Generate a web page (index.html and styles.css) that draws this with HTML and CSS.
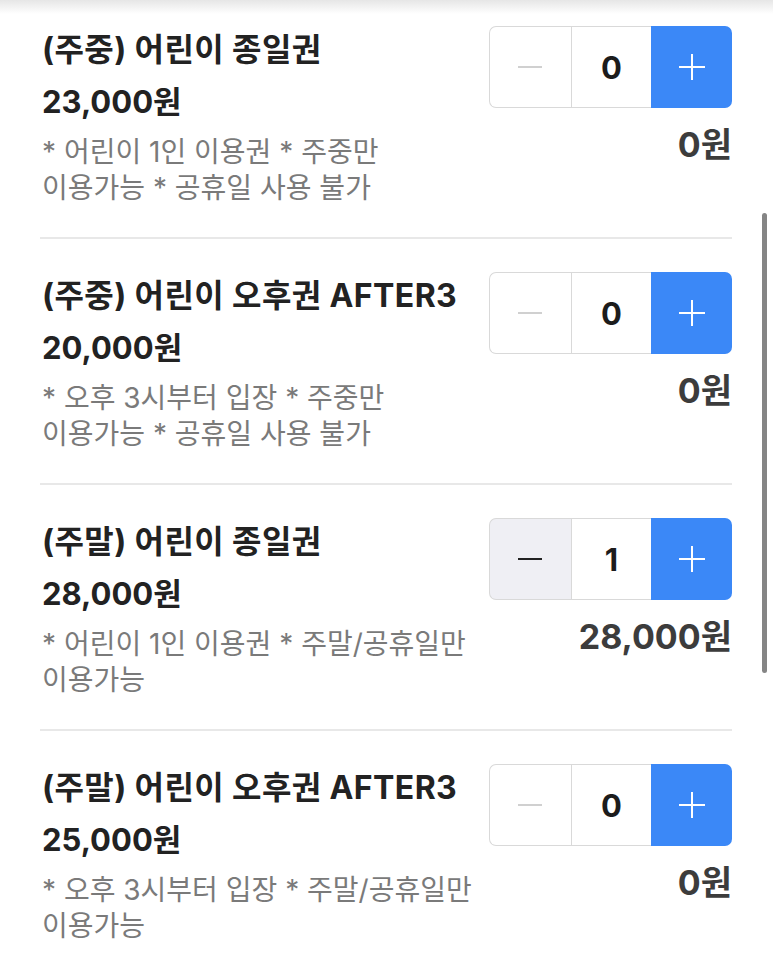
FILE: index.html
```html
<!DOCTYPE html>
<html lang="ko">
  <head>
    <meta charset="UTF-8" />
    <meta name="viewport" content="width=device-width, initial-scale=1.0" />
    <title>이용권 선택</title>
    <link rel="stylesheet" href="styles.css">
  </head>
  <body>
    <div class="top-shadow"></div>
    <div class="scroll-thumb"></div>
    <div class="ticket-list">
      <div class="ticket">
        <div class="info">
          <div class="name">(주중) 어린이 종일권</div>
          <div class="price">23,000원</div>
          <div class="desc">* 어린이 1인 이용권 * 주중만 이용가능 * 공휴일 사용 불가</div>
        </div>
        <div class="order">
          <div class="stepper">
            <div class="btn minus disabled">
              <svg width="26" height="26" viewBox="0 0 26 26"><path d="M1 13h24" /></svg>
            </div>
            <div class="count">0</div>
            <div class="btn plus">
              <svg width="28" height="28" viewBox="0 0 28 28"><path d="M1 14h26M14 1v26" /></svg>
            </div>
          </div>
          <div class="total">0원</div>
        </div>
      </div>

      <div class="ticket">
        <div class="info">
          <div class="name">(주중) 어린이 오후권 AFTER3</div>
          <div class="price">20,000원</div>
          <div class="desc">* 오후 3시부터 입장 * 주중만 이용가능 * 공휴일 사용 불가</div>
        </div>
        <div class="order">
          <div class="stepper">
            <div class="btn minus disabled">
              <svg width="26" height="26" viewBox="0 0 26 26"><path d="M1 13h24" /></svg>
            </div>
            <div class="count">0</div>
            <div class="btn plus">
              <svg width="28" height="28" viewBox="0 0 28 28"><path d="M1 14h26M14 1v26" /></svg>
            </div>
          </div>
          <div class="total">0원</div>
        </div>
      </div>

      <div class="ticket">
        <div class="info">
          <div class="name">(주말) 어린이 종일권</div>
          <div class="price">28,000원</div>
          <div class="desc">* 어린이 1인 이용권 * 주말/공휴일만 이용가능</div>
        </div>
        <div class="order">
          <div class="stepper">
            <div class="btn minus">
              <svg width="26" height="26" viewBox="0 0 26 26"><path d="M1 13h24" /></svg>
            </div>
            <div class="count">1</div>
            <div class="btn plus">
              <svg width="28" height="28" viewBox="0 0 28 28"><path d="M1 14h26M14 1v26" /></svg>
            </div>
          </div>
          <div class="total">28,000원</div>
        </div>
      </div>

      <div class="ticket">
        <div class="info">
          <div class="name">(주말) 어린이 오후권 AFTER3</div>
          <div class="price">25,000원</div>
          <div class="desc">* 오후 3시부터 입장 * 주말/공휴일만 이용가능</div>
        </div>
        <div class="order">
          <div class="stepper">
            <div class="btn minus disabled">
              <svg width="26" height="26" viewBox="0 0 26 26"><path d="M1 13h24" /></svg>
            </div>
            <div class="count">0</div>
            <div class="btn plus">
              <svg width="28" height="28" viewBox="0 0 28 28"><path d="M1 14h26M14 1v26" /></svg>
            </div>
          </div>
          <div class="total">0원</div>
        </div>
      </div>
    </div>
  </body>
</html>
```

FILE: styles.css
```css
body {
  margin: 0;
  height: 954px;
  overflow: hidden;
  background: #fff;
  font-family: Inter, "Noto Sans CJK KR", sans-serif;
  color: #222;
}
.top-shadow {
  position: absolute;
  top: 0;
  left: 0;
  right: 0;
  height: 14px;
  background: linear-gradient(#e6e6e6, rgba(255, 255, 255, 0));
  z-index: 2;
}
.scroll-thumb {
  position: absolute;
  top: 213px;
  left: 762px;
  width: 5px;
  height: 460px;
  border-radius: 3px;
  background: #858585;
}
.ticket-list {
  padding: 0 41px 0 40px;
}
.ticket {
  display: flex;
  justify-content: space-between;
  gap: 16px;
  padding: 33px 0 31px;
  border-bottom: 2px solid #e8e8e8;
}
.ticket:first-child {
  padding-top: 26px;
}
.info {
  flex: 1;
  padding-left: 2px;
}
.name {
  font-size: 32px;
  font-weight: 700;
  line-height: 47px;
  letter-spacing: 0.4px;
  white-space: nowrap;
}
.price {
  margin-top: 5px;
  font-size: 31px;
  font-weight: 700;
  line-height: 48px;
}
.desc {
  margin-top: 8px;
  font-size: 28px;
  line-height: 36px;
  color: #7a7a7a;
  word-break: keep-all;
}
.order {
  display: flex;
  flex-direction: column;
  align-items: flex-end;
}
.stepper {
  display: flex;
  width: 243px;
  height: 82px;
  border-radius: 7px;
}
.btn {
  width: 81px;
  display: flex;
  justify-content: center;
  align-items: center;
}
.btn svg {
  fill: none;
  stroke-width: 2;
}
.minus {
  background: #efeff4;
  border: 1.5px solid #d9d9d9;
  border-right: none;
  border-radius: 7px 0 0 7px;
}
.minus svg {
  stroke: #222;
}
.minus.disabled {
  background: #fff;
}
.minus.disabled svg {
  stroke: #d0d0d0;
}
.count {
  width: 80px;
  display: flex;
  justify-content: center;
  align-items: center;
  border: 1.5px solid #d9d9d9;
  border-right: none;
  font-size: 31px;
  font-weight: 700;
  color: #1c1c1c;
}
.plus {
  background: #3b88f7;
  border-radius: 0 7px 7px 0;
}
.plus svg {
  stroke: #fff;
}
.total {
  margin-top: 16px;
  font-size: 34px;
  font-weight: 700;
  line-height: 42px;
  color: #3c3c3c;
}
```
